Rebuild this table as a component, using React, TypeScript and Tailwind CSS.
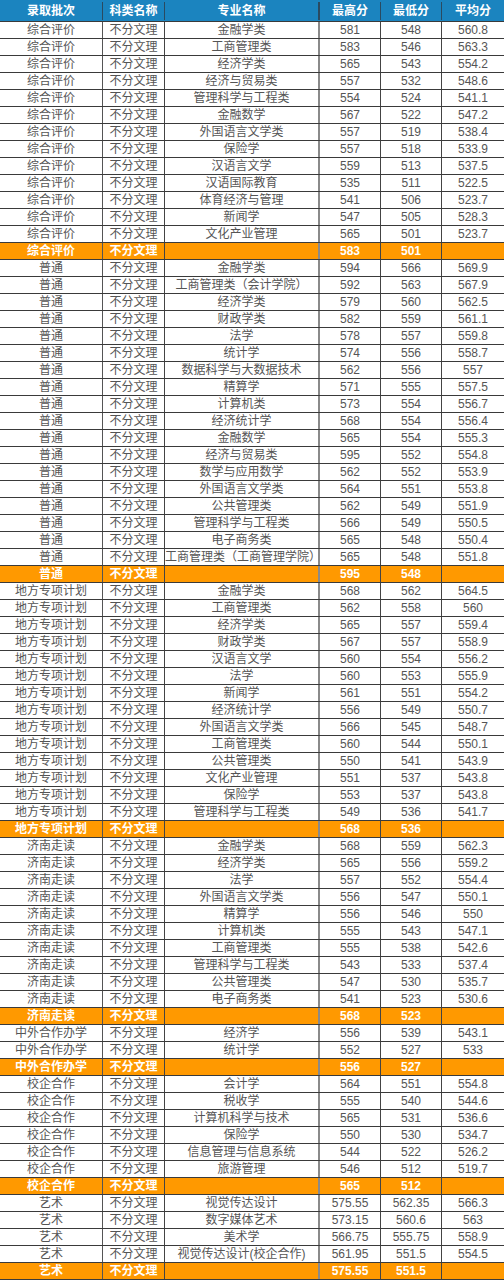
type Row = [string, string, string, string];

type Group = {
  batch: string;
  rows: Row[];
  max: string;
  min: string;
};

const groups: Group[] = [
  {
    batch: "综合评价",
    max: "583",
    min: "501",
    rows: [
      ["金融学类", "581", "548", "560.8"],
      ["工商管理类", "583", "546", "563.3"],
      ["经济学类", "565", "543", "554.2"],
      ["经济与贸易类", "557", "532", "548.6"],
      ["管理科学与工程类", "554", "524", "541.1"],
      ["金融数学", "567", "522", "547.2"],
      ["外国语言文学类", "557", "519", "538.4"],
      ["保险学", "557", "518", "533.9"],
      ["汉语言文学", "559", "513", "537.5"],
      ["汉语国际教育", "535", "511", "522.5"],
      ["体育经济与管理", "541", "506", "523.7"],
      ["新闻学", "547", "505", "528.3"],
      ["文化产业管理", "565", "501", "523.7"]
    ]
  },
  {
    batch: "普通",
    max: "595",
    min: "548",
    rows: [
      ["金融学类", "594", "566", "569.9"],
      ["工商管理类（会计学院）", "592", "563", "567.9"],
      ["经济学类", "579", "560", "562.5"],
      ["财政学类", "582", "559", "561.1"],
      ["法学", "578", "557", "559.8"],
      ["统计学", "574", "556", "558.7"],
      ["数据科学与大数据技术", "562", "556", "557"],
      ["精算学", "571", "555", "557.5"],
      ["计算机类", "573", "554", "556.7"],
      ["经济统计学", "568", "554", "556.4"],
      ["金融数学", "565", "554", "555.3"],
      ["经济与贸易类", "595", "552", "554.8"],
      ["数学与应用数学", "562", "552", "553.9"],
      ["外国语言文学类", "564", "551", "553.8"],
      ["公共管理类", "562", "549", "551.9"],
      ["管理科学与工程类", "566", "549", "550.5"],
      ["电子商务类", "565", "548", "550.4"],
      ["工商管理类（工商管理学院）", "565", "548", "551.8"]
    ]
  },
  {
    batch: "地方专项计划",
    max: "568",
    min: "536",
    rows: [
      ["金融学类", "568", "562", "564.5"],
      ["工商管理类", "562", "558", "560"],
      ["经济学类", "565", "557", "559.4"],
      ["财政学类", "567", "557", "558.9"],
      ["汉语言文学", "560", "554", "556.2"],
      ["法学", "560", "553", "555.9"],
      ["新闻学", "561", "551", "554.2"],
      ["经济统计学", "556", "549", "550.7"],
      ["外国语言文学类", "566", "545", "548.7"],
      ["工商管理类", "560", "544", "550.1"],
      ["公共管理类", "550", "541", "543.9"],
      ["文化产业管理", "551", "537", "543.8"],
      ["保险学", "553", "537", "543.8"],
      ["管理科学与工程类", "549", "536", "541.7"]
    ]
  },
  {
    batch: "济南走读",
    max: "568",
    min: "523",
    rows: [
      ["金融学类", "568", "559", "562.3"],
      ["经济学类", "565", "556", "559.2"],
      ["法学", "557", "552", "554.4"],
      ["外国语言文学类", "556", "547", "550.1"],
      ["精算学", "556", "546", "550"],
      ["计算机类", "555", "543", "547.1"],
      ["工商管理类", "555", "538", "542.6"],
      ["管理科学与工程类", "543", "533", "537.4"],
      ["公共管理类", "547", "530", "535.7"],
      ["电子商务类", "541", "523", "530.6"]
    ]
  },
  {
    batch: "中外合作办学",
    max: "556",
    min: "527",
    rows: [
      ["经济学", "556", "539", "543.1"],
      ["统计学", "552", "527", "533"]
    ]
  },
  {
    batch: "校企合作",
    max: "565",
    min: "512",
    rows: [
      ["会计学", "564", "551", "554.8"],
      ["税收学", "555", "540", "544.6"],
      ["计算机科学与技术", "565", "531", "536.6"],
      ["保险学", "550", "530", "534.7"],
      ["信息管理与信息系统", "544", "522", "526.2"],
      ["旅游管理", "546", "512", "519.7"]
    ]
  },
  {
    batch: "艺术",
    max: "575.55",
    min: "551.5",
    rows: [
      ["视觉传达设计", "575.55", "562.35", "566.3"],
      ["数字媒体艺术", "573.15", "560.6", "563"],
      ["美术学", "566.75", "555.75", "558.9"],
      ["视觉传达设计(校企合作)", "561.95", "551.5", "554.5"]
    ]
  }
];

const c1 = "w-[103px] shrink-0 border-r border-[#555] text-center";
const c2 = "w-[62px] shrink-0 border-r border-[#444] text-center";
const c3 = "w-[155px] shrink-0 border-r-2 border-[#8a8a8a] text-center";
const c4 = "w-[61px] shrink-0 border-r border-[#444] text-center";
const c5 = "w-[61px] shrink-0 border-r border-[#444] text-center";
const c6 = "flex-1 text-center";

function DataRow({ batch, row }: { batch: string; row: Row }) {
  return (
    <div className="flex h-[17px] items-center border-b border-[#3a3a3a] bg-white leading-[16px] text-[#555]">
      <div className={c1}>{batch}</div>
      <div className={c2}>不分文理</div>
      <div className={c3}>{row[0]}</div>
      <div className={c4}>{row[1]}</div>
      <div className={c5}>{row[2]}</div>
      <div className={c6}>{row[3]}</div>
    </div>
  );
}

function SummaryRow({ group }: { group: Group }) {
  return (
    <div className="flex h-[17px] items-center border-b border-[#3a3a3a] bg-[#ff9900] font-bold leading-[16px] text-white">
      <div className={c1}>{group.batch}</div>
      <div className={c2}>不分文理</div>
      <div className={c3}>&nbsp;</div>
      <div className={c4}>{group.max}</div>
      <div className={c5}>{group.min}</div>
      <div className={c6}>&nbsp;</div>
    </div>
  );
}

export default function App() {
  return (
    <div
      className="w-[504px] bg-white text-[12px]"
      style={{ fontFamily: '"Liberation Sans", "Noto Sans CJK SC", sans-serif' }}
    >
      <div className="flex h-[22px] items-center border-b border-[#3a3a3a] bg-[#1b84bf] font-bold text-white">
        <div className="w-[103px] shrink-0 border-r border-[#2a4a60] text-center">录取批次</div>
        <div className="w-[62px] shrink-0 border-r border-[#2a4a60] text-center">科类名称</div>
        <div className="w-[155px] shrink-0 border-r-2 border-[#2a4a60] text-center">专业名称</div>
        <div className="w-[61px] shrink-0 border-r border-[#2a4a60] text-center">最高分</div>
        <div className="w-[61px] shrink-0 border-r border-[#2a4a60] text-center">最低分</div>
        <div className="flex-1 text-center">平均分</div>
      </div>
      {groups.map((group) => (
        <div key={group.batch}>
          {group.rows.map((row, index) => (
            <DataRow key={index} batch={group.batch} row={row} />
          ))}
          <SummaryRow group={group} />
        </div>
      ))}
    </div>
  );
}
